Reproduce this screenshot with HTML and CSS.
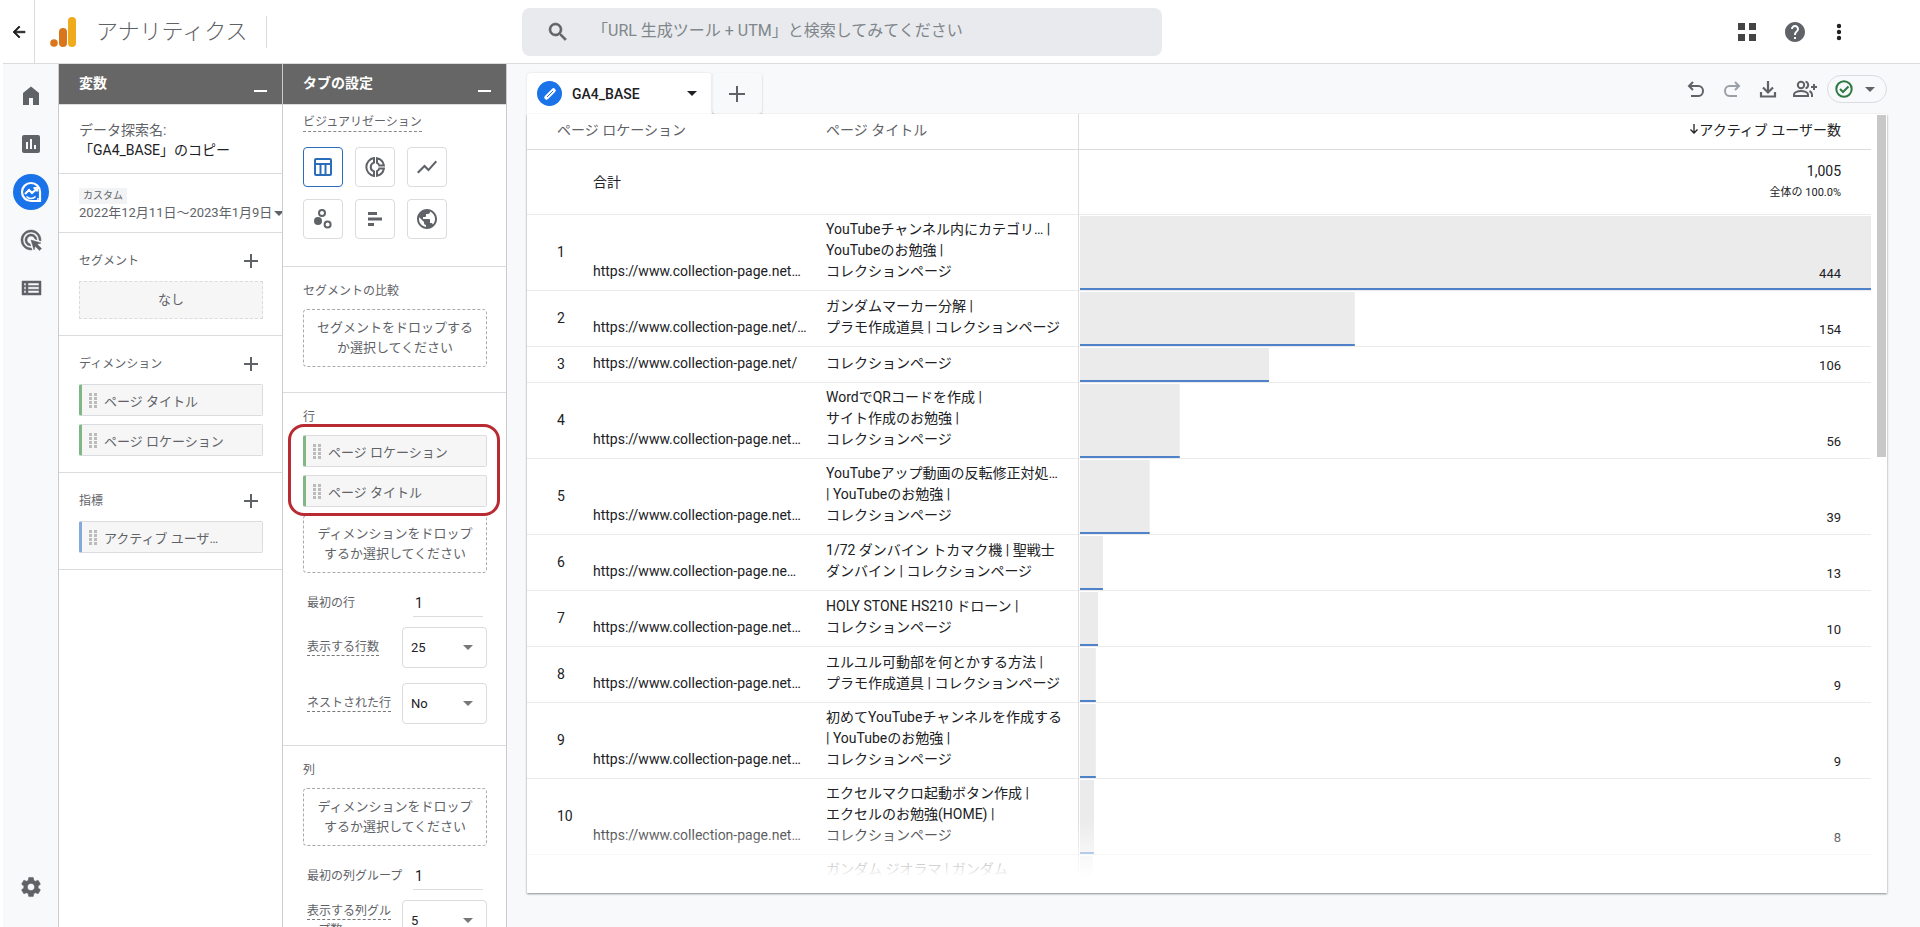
FILE: index.html
```html
<!DOCTYPE html>
<html lang="ja">

<head>
    <meta charset="UTF-8">
    <meta name="viewport" content="width=device-width, initial-scale=1.0">
    <title>アナリティクス</title>
    <link rel="stylesheet" href="styles.css">
</head>

<body>
    <header class="topbar">
        <button class="back" aria-label="戻る">
            <svg width="18" height="18" viewBox="0 0 24 24"><path d="M20 11H7.83l5.59-5.59L12 4l-8 8 8 8 1.41-1.41L7.83 13H20z" fill="#202124" stroke="#202124" /></svg>
        </button>
        <div class="brand">
            <svg width="26" height="30" viewBox="0 0 26 30">
                <circle cx="4" cy="26" r="3.8" fill="#d9761c" />
                <rect x="9" y="11" width="8" height="19" rx="4" fill="#d9761c" />
                <rect x="18" y="0" width="8" height="30" rx="4" fill="#f0ab1d" />
            </svg>
            <span class="brand-name">アナリティクス</span>
        </div>
        <label class="search">
            <svg width="24" height="24" viewBox="0 0 24 24"><path d="M15.5 14h-.79l-.28-.27A6.47 6.47 0 0 0 16 9.5 6.5 6.5 0 1 0 9.5 16c1.61 0 3.09-.59 4.23-1.57l.27.28v.79l5 4.99L20.49 19l-4.99-5zm-6 0C7.01 14 5 11.99 5 9.5S7.01 5 9.5 5 14 7.01 14 9.5 11.99 14 9.5 14z" stroke="#5f6368" stroke-width=".6" /></svg>
            <input type="text" aria-label="検索" placeholder="「URL 生成ツール + UTM」と検索してみてください">
        </label>
        <div class="top-actions">
            <button class="icon-btn" aria-label="アプリ">
                <svg width="18" height="18" viewBox="0 0 18 18"><path d="M0 0h7v7H0zM11 0h7v7h-7zM0 11h7v7H0zM11 11h7v7h-7z" fill="#444" /></svg>
            </button>
            <button class="icon-btn" aria-label="ヘルプ">
                <svg width="24" height="24" viewBox="0 0 24 24"><path d="M12 2C6.48 2 2 6.48 2 12s4.48 10 10 10 10-4.480 10-10S17.520 2 12 2zm1 17h-2v-2h2v2zm2.070-7.750l-.9.920C13.450 12.900 13 13.500 13 15h-2v-.5c0-1.100.450-2.100 1.170-2.830l1.240-1.260c.370-.36.590-.86.590-1.410 0-1.100-.9-2-2-2s-2 .9-2 2H8c0-2.210 1.790-4 4-4s4 1.790 4 4c0 .88-.36 1.680-.93 2.250z" /></svg>
            </button>
            <button class="icon-btn narrow" aria-label="その他">
                <svg width="24" height="24" viewBox="0 0 24 24" fill="#202124"><circle cx="12" cy="6" r="2.200" /><circle cx="12" cy="12" r="2.200" /><circle cx="12" cy="18" r="2.200" /></svg>
            </button>
        </div>
    </header>

    <div class="layout">
        <nav class="rail">
            <a href="#" aria-label="ホーム"><svg width="24" height="24" viewBox="0 0 24 24"><path d="M4 21V9l8-6.500L20 9v12h-6v-7h-4v7z" /></svg></a>
            <a href="#" aria-label="レポート"><svg width="24" height="24" viewBox="0 0 24 24"><path d="M19 3H5a2 2 0 0 0-2 2v14c0 1.100.9 2 2 2h14a2 2 0 0 0 2-2V5a2 2 0 0 0-2-2zM9 17H7v-7h2zm4 0h-2V7h2zm4 0h-2v-4h2z" /></svg></a>
            <a href="#" class="current" aria-label="探索">
                <svg width="24" height="24" viewBox="0 0 24 24" fill="none" stroke="#fff" stroke-width="2.200">
                    <path d="M12 3a9 9 0 1 0 0 18h9v-9a9 9 0 0 0-9-9z" />
                    <path d="M6 14l4-4 3 3 5-4.500M14.500 8H18v3.500" />
                    <path d="M7.500 16.500a6 6 0 0 0 9 0" stroke-width="1.600" />
                    <circle cx="18.800" cy="19" r="1" fill="#fff" stroke="none" />
                </svg>
            </a>
            <a href="#" aria-label="広告"><svg width="24" height="24" viewBox="0 0 24 24"><path d="M11.710 17.990C8.530 17.840 6 15.220 6 12c0-3.310 2.690-6 6-6 3.220 0 5.840 2.530 5.990 5.710l-2.100-.63C15.480 9.310 13.890 8 12 8c-2.210 0-4 1.790-4 4 0 1.890 1.310 3.480 3.080 3.890zM22 12c0 .3-.01.6-.04.9l-1.970-.59C20 12.210 20 12.100 20 12c0-4.420-3.580-8-8-8s-8 3.580-8 8 3.580 8 8 8c.1 0 .21 0 .31-.01l.59 1.970c-.3.030-.6.040-.9.040C6.480 22 2 17.520 2 12S6.480 2 12 2s10 4.480 10 10zm-3.770 4.260L22 15l-10-3 3 10 1.260-3.770 4.270 4.270 1.980-1.980z" stroke="#5f6368" stroke-width=".5" /></svg></a>
            <a href="#" aria-label="設定一覧"><svg width="24" height="24" viewBox="0 0 24 24"><path d="M3 5v14h19V5H3zm4 2v2.500H5V7h2zm-2 6.250v-2.500h2v2.500H5zm0 1.250h2V17H5v-2.500zM20 17H9v-2.500h11V17zm0-3.750H9v-2.500h11v2.500zM20 9.500H9V7h11v2.500z" stroke="#5f6368" stroke-width=".5" /></svg></a>
            <a href="#" class="admin" aria-label="管理"><svg width="24" height="24" viewBox="0 0 24 24"><path d="M19.140 12.940c.04-.3.060-.61.060-.94 0-.32-.02-.64-.07-.94l2.030-1.580a.49.49 0 0 0 .12-.61l-1.920-3.320a.488.488 0 0 0-.59-.22l-2.390.96c-.5-.38-1.030-.7-1.620-.94l-.36-2.540a.484.484 0 0 0-.48-.41h-3.840c-.24 0-.43.17-.47.41l-.36 2.540c-.59.24-1.130.57-1.620.94l-2.390-.96c-.22-.08-.47 0-.59.22L2.740 8.870c-.12.21-.08.47.12.61l2.030 1.580c-.05.3-.09.63-.09.94s.02.64.07.94l-2.030 1.580a.49.49 0 0 0-.12.61l1.920 3.320c.12.22.37.29.59.22l2.390-.96c.5.38 1.030.7 1.620.94l.36 2.540c.05.24.24.41.48.41h3.840c.24 0 .44-.17.47-.41l.36-2.540c.59-.24 1.130-.56 1.620-.94l2.390.96c.22.080.47 0 .59-.22l1.920-3.320c.12-.22.070-.47-.12-.61zM12 15.600A3.610 3.610 0 0 1 8.400 12c0-1.980 1.620-3.600 3.600-3.600s3.600 1.620 3.600 3.600-1.620 3.600-3.600 3.600z" stroke="#5f6368" stroke-width=".5" /></svg></a>
        </nav>

        <!-- variables -->
        <aside class="panel">
            <div class="panel-head">
                <h2>変数</h2>
                <button class="minimize" aria-label="最小化"></button>
            </div>
            <section class="exploration">
                <label for="expName">データ探索名:</label>
                <input type="text" id="expName" value="「GA4_BASE」のコピー">
            </section>
            <section class="dates">
                <span class="badge">カスタム</span>
                <button class="date-btn">2022年12月11日～2023年1月9日<span class="caret"></span></button>
            </section>
            <section class="group">
                <div class="group-head">
                    <h3>セグメント</h3>
                    <button class="plus" aria-label="セグメントを追加"></button>
                </div>
                <div class="none-box">なし</div>
            </section>
            <section class="group">
                <div class="group-head">
                    <h3>ディメンション</h3>
                    <button class="plus" aria-label="ディメンションを追加"></button>
                </div>
                <div class="chip"><span class="grip"></span>ページ タイトル</div>
                <div class="chip"><span class="grip"></span>ページ ロケーション</div>
            </section>
            <section class="group">
                <div class="group-head">
                    <h3>指標</h3>
                    <button class="plus" aria-label="指標を追加"></button>
                </div>
                <div class="chip metric"><span class="grip"></span>アクティブ ユーザ…</div>
            </section>
        </aside>

        <!-- tab settings -->
        <aside class="panel">
            <div class="panel-head">
                <h2>タブの設定</h2>
                <button class="minimize" aria-label="最小化"></button>
            </div>
            <section class="visual">
                <h3><span>ビジュアリゼーション</span></h3>
                <div class="visual-grid">
                    <button class="selected" aria-label="自由形式"><svg width="24" height="24" viewBox="0 0 24 24" fill="none" stroke="#2a6ebb" stroke-width="2"><rect x="4" y="4" width="16" height="16" rx="1" /><path d="M4 9h16M9.500 9v11M14.500 9v11" /></svg></button>
                    <button aria-label="ドーナツグラフ"><svg width="24" height="24" viewBox="0 0 24 24" fill="none" stroke="#5f6368" stroke-width="2"><path d="M11 3.100a9 9 0 0 0 0 17.800v-4.500a4.600 4.600 0 0 1 0-8.800zM14 3.200v4.600a4.600 4.600 0 0 1 2.300 2.700h4.600A9 9 0 0 0 14 3.200zM14 20.800v-4.600a4.600 4.600 0 0 0 2.300-2.700h4.600a9 9 0 0 1-6.900 7.300z" /></svg></button>
                    <button aria-label="折れ線グラフ"><svg width="24" height="24" viewBox="0 0 24 24"><path d="M3.500 18.490l6-6.010 4 4L22 6.920l-1.410-1.410-7.090 7.970-4-4L2 16.990z" /></svg></button>
                    <button aria-label="散布図"><svg width="24" height="24" viewBox="0 0 24 24" fill="none" stroke="#5f6368" stroke-width="2"><circle cx="7" cy="14" r="4" fill="#5f6368" stroke="none" /><circle cx="11" cy="6" r="3" /><circle cx="16.600" cy="17.600" r="3" /></svg></button>
                    <button aria-label="棒グラフ"><svg width="24" height="24" viewBox="0 0 24 24"><path d="M5 5h9v3H5zM5 10.500h14v3H5zM5 16h6v3H5z" /></svg></button>
                    <button aria-label="地図"><svg width="24" height="24" viewBox="0 0 24 24"><path d="M12 2C6.480 2 2 6.480 2 12s4.480 10 10 10 10-4.480 10-10S17.520 2 12 2zm-1 17.930c-3.950-.49-7-3.850-7-7.930 0-.62.080-1.210.21-1.790L9 15v1c0 1.100.9 2 2 2v1.930zm6.900-2.540c-.26-.81-1-1.390-1.900-1.390h-1v-3c0-.55-.45-1-1-1H8v-2h2c.55 0 1-.45 1-1V7h2c1.100 0 2-.9 2-2v-.41c2.930 1.190 5 4.060 5 7.410 0 2.080-.8 3.970-2.100 5.390z" /></svg></button>
                </div>
            </section>
            <section class="slot">
                <h3>セグメントの比較</h3>
                <button class="drop">セグメントをドロップする<br>か選択してください</button>
            </section>
            <section class="slot">
                <h3>行</h3>
                <div class="marked">
                    <div class="chip"><span class="grip"></span>ページ ロケーション</div>
                    <div class="chip"><span class="grip"></span>ページ タイトル</div>
                </div>
                <button class="drop">ディメンションをドロップ<br>するか選択してください</button>
                <div class="fields">
                    <div class="field text-field">
                        <label for="firstRow">最初の行</label>
                        <input type="text" id="firstRow" value="1">
                    </div>
                    <div class="field">
                        <label for="rowCount"><span>表示する行数</span></label>
                        <div class="select"><select id="rowCount"><option>25</option></select></div>
                    </div>
                    <div class="field nested">
                        <label for="nestedRows"><span>ネストされた行</span></label>
                        <div class="select"><select id="nestedRows"><option>No</option></select></div>
                    </div>
                </div>
            </section>
            <section class="slot">
                <h3>列</h3>
                <button class="drop">ディメンションをドロップ<br>するか選択してください</button>
                <div class="fields">
                    <div class="field text-field">
                        <label for="firstCol">最初の列グループ</label>
                        <input type="text" id="firstCol" value="1">
                    </div>
                    <div class="field">
                        <label for="colCount"><span>表示する列グル<br>ープ数</span></label>
                        <div class="select"><select id="colCount"><option>5</option></select></div>
                    </div>
                </div>
            </section>
        </aside>

        <main class="canvas">
            <div class="tabs">
                <button class="tab">
                    <span class="pencil"><svg width="16" height="16" viewBox="0 0 16 16"><path d="M4.500 11.500L11.500 4.500" stroke="#fff" stroke-width="4.500" stroke-linecap="round" /><path d="M5 11l6-6" stroke="#1a73e8" stroke-width="1" /></svg></span>
                    GA4_BASE
                    <span class="caret"></span>
                </button>
                <button class="tab-add" aria-label="タブを追加"><span class="plus"></span></button>
                <div class="tools">
                    <button aria-label="元に戻す"><svg width="24" height="24" viewBox="0 0 24 24" fill="none" stroke="#5f6368" stroke-width="2"><path d="M9 4L5 8l4 4M5 8h9.500a4.500 5 0 0 1 0 10H7" transform="translate(0 1)" /></svg></button>
                    <button aria-label="やり直す"><svg width="24" height="24" viewBox="0 0 24 24" fill="none" stroke="#9aa0a6" stroke-width="2"><path d="M15 4l4 4-4 4M19 8H9.500a4.500 5 0 0 0 0 10H17" transform="translate(0 1)" /></svg></button>
                    <button aria-label="ダウンロード"><svg width="24" height="24" viewBox="0 0 24 24" fill="none" stroke="#5f6368" stroke-width="2.200"><path d="M12 4v11M7 10.500l5 5 5-5M5 15v4.500h14V15" /></svg></button>
                    <button aria-label="共有"><svg width="26" height="24" viewBox="0 0 26 24" fill="none" stroke="#5f6368" stroke-width="2"><circle cx="9" cy="8" r="3.200" /><path d="M2 19v-1.500C2 15.200 6 14 9 14s7 1.200 7 3.500V19zM13.500 4.600a3.500 3.500 0 0 1 0 6.800M17.500 14c1.500.8 2.500 2 2.500 3.500V20M22 7v6M19 10h6" /></svg></button>
                    <button class="status" aria-label="データ品質">
                        <svg width="18" height="18" viewBox="0 0 18 18" fill="none" stroke="#2d7a43" stroke-width="2"><circle cx="9" cy="9" r="7.700" /><path d="M5 9l3 3 5.500-5.500" /></svg>
                        <span class="caret"></span>
                    </button>
                </div>
            </div>

            <div class="card">
                <div class="table-wrap">
                    <table class="report">
                        <colgroup>
                            <col class="col-num">
                            <col class="col-location">
                            <col class="col-title">
                            <col>
                        </colgroup>
                        <thead>
                            <tr>
                                <th colspan="2" class="num">ページ ロケーション</th>
                                <th>ページ タイトル</th>
                                <th class="users"><svg width="10" height="12" viewBox="0 0 10 12" fill="none" stroke="#202124" stroke-width="1.300"><path d="M5 1v9M1.500 6.500L5 10l3.500-3.500" /></svg>アクティブ ユーザー数</th>
                            </tr>
                        </thead>
                        <tbody>
                            <tr class="total">
                                <td></td>
                                <td>合計</td>
                                <td></td>
                                <td class="sum"><strong>1,005</strong><small>全体の 100.0%</small></td>
                            </tr>
                            <tr>
                                <td class="num">1</td>
                                <td>https://www.collection-page.net…</td>
                                <td>YouTubeチャンネル内にカテゴリ… |<br>YouTubeのお勉強 |<br>コレクションページ</td>
                                <td class="bar" style="background-size: 100% 100%">444</td>
                            </tr>
                            <tr class="two-line">
                                <td class="num">2</td>
                                <td>https://www.collection-page.net/…</td>
                                <td>ガンダムマーカー分解 |<br>プラモ作成道具 | コレクションページ</td>
                                <td class="bar" style="background-size: 34.7% 100%">154</td>
                            </tr>
                            <tr class="one-line">
                                <td class="num">3</td>
                                <td>https://www.collection-page.net/</td>
                                <td>コレクションページ</td>
                                <td class="bar" style="background-size: 23.9% 100%">106</td>
                            </tr>
                            <tr>
                                <td class="num">4</td>
                                <td>https://www.collection-page.net…</td>
                                <td>WordでQRコードを作成 |<br>サイト作成のお勉強 |<br>コレクションページ</td>
                                <td class="bar" style="background-size: 12.6% 100%">56</td>
                            </tr>
                            <tr>
                                <td class="num">5</td>
                                <td>https://www.collection-page.net…</td>
                                <td>YouTubeアップ動画の反転修正対処…<br>| YouTubeのお勉強 |<br>コレクションページ</td>
                                <td class="bar" style="background-size: 8.8% 100%">39</td>
                            </tr>
                            <tr class="two-line">
                                <td class="num">6</td>
                                <td>https://www.collection-page.ne…</td>
                                <td>1/72 ダンバイン トカマク機 | 聖戦士<br>ダンバイン | コレクションページ</td>
                                <td class="bar" style="background-size: 2.9% 100%">13</td>
                            </tr>
                            <tr class="two-line">
                                <td class="num">7</td>
                                <td>https://www.collection-page.net…</td>
                                <td>HOLY STONE HS210 ドローン |<br>コレクションページ</td>
                                <td class="bar" style="background-size: 2.3% 100%">10</td>
                            </tr>
                            <tr class="two-line">
                                <td class="num">8</td>
                                <td>https://www.collection-page.net…</td>
                                <td>ユルユル可動部を何とかする方法 |<br>プラモ作成道具 | コレクションページ</td>
                                <td class="bar" style="background-size: 2% 100%">9</td>
                            </tr>
                            <tr>
                                <td class="num">9</td>
                                <td>https://www.collection-page.net…</td>
                                <td>初めてYouTubeチャンネルを作成する<br>| YouTubeのお勉強 |<br>コレクションページ</td>
                                <td class="bar" style="background-size: 2% 100%">9</td>
                            </tr>
                            <tr>
                                <td class="num">10</td>
                                <td>https://www.collection-page.net…</td>
                                <td>エクセルマクロ起動ボタン作成 |<br>エクセルのお勉強(HOME) |<br>コレクションページ</td>
                                <td class="bar" style="background-size: 1.8% 100%">8</td>
                            </tr>
                            <tr>
                                <td class="num"></td>
                                <td></td>
                                <td>ガンダム ジオラマ | ガンダム<br>&nbsp;</td>
                                <td class="bar" style="background-size: 1.6% 100%"></td>
                            </tr>
                        </tbody>
                    </table>
                </div>
                <div class="scrollbar"><div class="thumb"></div></div>
            </div>
        </main>
    </div>
</body>

</html>
```

FILE: styles.css
```css
:root {
    --text: #202124;
    --grey: #5f6368;
    --line: #dadce0;
    --row-line: #ebebeb;
    --bg: #f8f9fb;
    --blue: #1a73e8;
}

* {
    box-sizing: border-box;
}

body {
    margin: 0;
    padding-left: 3px;
    height: 100vh;
    display: flex;
    flex-direction: column;
    overflow: hidden;
    background: #fff;
    color: var(--text);
    font-family: Roboto, "Noto Sans CJK JP", sans-serif;
    font-size: 14px;
}

button,
input,
select {
    font: inherit;
    color: inherit;
    border: 0;
    padding: 0;
    background: none;
    outline: 0;
}

button {
    cursor: pointer;
}

svg {
    display: block;
    flex: none;
    fill: var(--grey);
}

svg[fill="none"] {
    fill: none;
}

svg[fill="#202124"] {
    fill: #202124;
}

h2,
h3 {
    margin: 0;
}

/* top bar */
.topbar {
    height: 64px;
    flex: none;
    display: flex;
    border-bottom: 1px solid var(--line);
}

.back {
    width: 32px;
    flex: none;
    display: flex;
    align-items: center;
    justify-content: center;
    border-right: 1px solid var(--line);
}

.brand {
    width: 487px;
    flex: none;
    display: flex;
    align-items: center;
    padding-left: 15px;
}

.brand-name {
    margin-left: 20px;
    padding-right: 18px;
    border-right: 1px solid var(--line);
    font-size: 22px;
    font-weight: 300;
    line-height: 32px;
    color: var(--grey);
}

.search {
    flex: 0 1 640px;
    height: 48px;
    margin-top: 8px;
    padding-left: 24px;
    display: flex;
    align-items: center;
    background: #e8eaed;
    border-radius: 8px;
}

.search input {
    flex: 1;
    min-width: 0;
    height: 40px;
    margin: 0 20px 4px 22px;
    font-size: 16px;
}

.search input::placeholder {
    color: #80868b;
}

.top-actions {
    margin-left: auto;
    padding-right: 65px;
    display: flex;
    align-items: center;
    gap: 8px;
}

.icon-btn {
    width: 40px;
    height: 40px;
    display: flex;
    align-items: center;
    justify-content: center;
}

.narrow {
    width: 32px;
}

.layout {
    flex: 1;
    min-height: 0;
    display: flex;
}

/* left navigation */
.rail {
    width: 56px;
    flex: none;
    display: flex;
    flex-direction: column;
    align-items: center;
    gap: 12px;
    padding: 14px 0 22px;
    background: var(--bg);
    border-right: 1px solid #ccc;
}

.rail a {
    width: 36px;
    height: 36px;
    display: flex;
    align-items: center;
    justify-content: center;
    border-radius: 50%;
}

.rail .current {
    background: var(--blue);
}

.rail .admin {
    margin-top: auto;
}

/* panels */
.panel {
    width: 224px;
    flex: none;
    overflow: hidden;
    border-right: 1px solid #ccc;
    color: var(--grey);
    font-size: 13px;
}

.panel-head {
    height: 41px;
    display: flex;
    justify-content: space-between;
    padding: 0 15px 0 20px;
    background: #666;
    border-bottom: 1px solid var(--line);
    color: #fff;
}

.panel-head h2 {
    font-size: 14px;
    line-height: 38px;
}

.minimize {
    width: 13px;
    height: 2px;
    margin-top: 26px;
    background: #fff;
}

.panel section {
    border-bottom: 1px solid var(--line);
}

.panel h3 {
    font-size: 12px;
    font-weight: 400;
    line-height: 20px;
}

.exploration {
    padding: 15px 20px 13px;
    font-size: 14px;
    line-height: 20px;
}

.exploration label,
.exploration input {
    display: block;
    width: 100%;
    height: 20px;
}

.exploration input {
    color: var(--text);
}

.dates {
    height: 59px;
    padding: 14px 0 0 20px;
}

.badge {
    display: block;
    width: fit-content;
    padding: 0 4px;
    background: #f1f3f4;
    font-size: 10px;
    line-height: 16px;
}

.date-btn {
    display: flex;
    align-items: center;
    gap: 2px;
    line-height: 18px;
    white-space: nowrap;
}

.caret {
    width: 0;
    height: 0;
    border: 5px solid transparent;
    border-top-color: currentColor;
    border-bottom: 0;
}

.group {
    padding: 16px 19px 16px 20px;
    display: flex;
    flex-direction: column;
    gap: 8px;
}

.group-head {
    height: 24px;
    padding-right: 5px;
    display: flex;
    align-items: center;
    justify-content: space-between;
}

.plus {
    width: 14px;
    height: 14px;
    background: linear-gradient(var(--grey), var(--grey)) center / 100% 2px no-repeat,
        linear-gradient(var(--grey), var(--grey)) center / 2px 100% no-repeat;
}

.none-box {
    height: 38px;
    line-height: 36px;
    text-align: center;
    background: #f6f6f6;
    border: 1px dashed var(--line);
}

.chip {
    height: 32px;
    display: flex;
    align-items: center;
    gap: 7px;
    padding: 1px 0 0 7px;
    background: #f6f6f6;
    border: 1px solid var(--line);
    border-left: 3px solid #81b784;
    border-radius: 2px;
}

.chip.metric {
    border-left-color: #84a9dc;
}

.grip {
    width: 8px;
    height: 16px;
    background: conic-gradient(from 270deg at 3px 3px, #bbb 90deg, transparent 0) 0 0 / 5px 4px;
}

.visual {
    padding: 8px 20px 27px;
}

.visual h3 {
    line-height: 18px;
}

.visual h3 span {
    display: inline-block;
    border-bottom: 1px dashed #888;
}

.visual-grid {
    display: grid;
    grid-template-columns: repeat(3, 40px);
    gap: 12px;
    margin-top: 15px;
}

.visual-grid button {
    height: 40px;
    display: flex;
    align-items: center;
    justify-content: center;
    border: 1px solid var(--line);
    border-radius: 4px;
}

.visual-grid .selected {
    border-color: #2a6ebb;
}

.slot {
    padding: 14px 19px 25px 20px;
    display: flex;
    flex-direction: column;
    gap: 8px;
}

.slot:has(.fields) {
    padding-bottom: 21px;
}

.drop {
    height: 58px;
    line-height: 20px;
    border: 1px dashed #aaa;
    border-radius: 4px;
}

.marked {
    position: relative;
    display: flex;
    flex-direction: column;
    gap: 8px;
}

.marked::after {
    content: '';
    position: absolute;
    inset: -11px -13px -9px -15px;
    border: 3px solid #b92b32;
    border-radius: 16px;
    pointer-events: none;
}

.fields {
    margin-top: 8px;
    display: flex;
    flex-direction: column;
    gap: 10px;
}

.field {
    display: grid;
    grid-template-columns: 95px 1fr;
    align-items: center;
    padding-left: 4px;
}

.nested {
    margin-top: 5px;
}

.field label {
    font-size: 12px;
    line-height: 19px;
    white-space: nowrap;
}

.field label span {
    padding-bottom: 1px;
    border-bottom: 1px dashed #777;
}

.text-field input {
    min-width: 0;
    height: 28px;
    margin: 0 4px 0 11px;
    padding-left: 2px;
    font-size: 14px;
    color: var(--text);
    border-bottom: 1px solid var(--line);
}

.select {
    height: 41px;
    display: grid;
    align-items: center;
    border: 1px solid var(--line);
    border-radius: 4px;
}

.select select {
    grid-area: 1 / 1;
    height: 100%;
    padding-left: 8px;
    appearance: none;
    color: var(--text);
}

.select::after {
    content: '';
    grid-area: 1 / 1;
    justify-self: end;
    margin-right: 13px;
    border: 5px solid transparent;
    border-top-color: #777;
    border-bottom: 0;
    pointer-events: none;
}

/* report */
.canvas {
    flex: 1;
    min-width: 0;
    display: flex;
    flex-direction: column;
    padding: 9px 33px 34px 20px;
    background: var(--bg);
}

.tabs {
    height: 41px;
    flex: none;
    display: flex;
}

.tab {
    width: 185px;
    display: flex;
    align-items: center;
    padding: 0 15px 0 10px;
    background: #fff;
    border-radius: 4px 4px 0 0;
    box-shadow: 0 0 2px rgba(0, 0, 0, 0.15);
    font-weight: 500;
}

.tab .caret {
    margin-left: auto;
}

.pencil {
    width: 25px;
    height: 25px;
    margin-right: 10px;
    display: flex;
    align-items: center;
    justify-content: center;
    border-radius: 50%;
    background: var(--blue);
}

.tab-add {
    width: 50px;
    display: flex;
    align-items: center;
    justify-content: center;
    border-radius: 4px;
    box-shadow: 0 1px 2px rgba(0, 0, 0, 0.25);
}

.tab-add .plus {
    width: 16px;
    height: 16px;
}

.tools {
    margin-left: auto;
    height: 32px;
    display: flex;
    align-items: center;
    gap: 12px;
}

.tools .status {
    width: 60px;
    height: 28px;
    margin-left: -3px;
    padding-left: 7px;
    display: flex;
    align-items: center;
    gap: 12px;
    border: 1px solid var(--line);
    border-radius: 14px;
    color: var(--grey);
}

.card {
    position: relative;
    flex: 1;
    min-height: 0;
    display: flex;
    overflow: hidden;
    background: #fff;
    box-shadow: 0 1px 2px rgba(0, 0, 0, 0.45);
}

/* rows fade out at the bottom of the card */
.card::after {
    content: '';
    position: absolute;
    left: 0;
    right: 0;
    bottom: 0;
    height: 74px;
    background: linear-gradient(rgba(255, 255, 255, 0), #fff 58px);
    pointer-events: none;
}

.table-wrap {
    flex: 1;
    min-width: 0;
    overflow: hidden;
}

.report {
    width: 100%;
    table-layout: fixed;
    border-spacing: 0;
    line-height: 21px;
    white-space: nowrap;
}

.col-num {
    width: 66px;
}

.col-location {
    width: 233px;
}

.col-title {
    width: 252px;
}

.report th {
    height: 36px;
    padding: 0 0 2px;
    font-weight: 400;
    text-align: left;
    color: var(--grey);
    border-bottom: 1px solid var(--line);
}

.report td {
    padding: 4px 0 8px;
    vertical-align: bottom;
    border-bottom: 1px solid var(--row-line);
}

.two-line {
    height: 56px;
}

.one-line {
    height: 36px;
}

.report .num {
    padding-left: 30px;
}

.report td.num {
    vertical-align: middle;
    padding-top: 5px;
    padding-bottom: 5px;
}

.report .users {
    padding-right: 30px;
    text-align: right;
    color: var(--text);
    border-left: 1px solid var(--line);
}

.users svg {
    display: inline-block;
    fill: none;
}

.report .total td {
    height: 65px;
    padding: 0;
    vertical-align: middle;
}

.report .total .sum {
    padding: 0 30px 0 0;
    text-align: right;
    border-left: 1px solid var(--line);
}

.sum strong,
.sum small {
    display: block;
    line-height: 22px;
}

.sum strong {
    font-weight: 400;
}

.sum small {
    font-size: 11px;
}

.report .bar {
    padding: 4px 30px 6px 0;
    text-align: right;
    font-size: 13px;
    border-left: 1px solid var(--line);
    background: linear-gradient(to top, #4f82c8 2px, #ebebeb 2px, #ebebeb calc(100% - 1px), transparent calc(100% - 1px)) 1px 0 no-repeat padding-box;
}

.scrollbar {
    width: 9px;
    flex: none;
    margin: 1px 1px 0 6px;
}

.thumb {
    height: 44%;
    background: #c8c8c8;
}
```
